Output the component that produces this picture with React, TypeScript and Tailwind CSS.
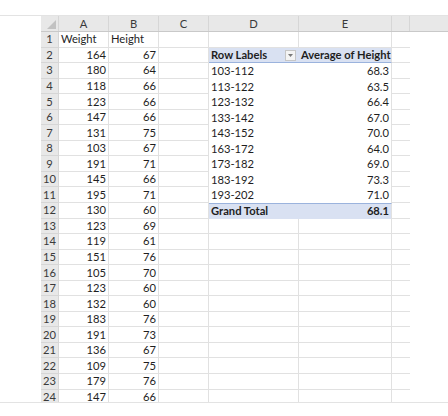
const WEIGHTS: [number, number][] = [
  [164, 67],
  [180, 64],
  [118, 66],
  [123, 66],
  [147, 66],
  [131, 75],
  [103, 67],
  [191, 71],
  [145, 66],
  [195, 71],
  [130, 60],
  [123, 69],
  [119, 61],
  [151, 76],
  [105, 70],
  [123, 60],
  [132, 60],
  [183, 76],
  [191, 73],
  [136, 67],
  [109, 75],
  [179, 76],
  [147, 66],
];

// pivot body, rows 3..11
const PIVOT: [string, string][] = [
  ['103-112', '68.3'],
  ['113-122', '63.5'],
  ['123-132', '66.4'],
  ['133-142', '67.0'],
  ['143-152', '70.0'],
  ['163-172', '64.0'],
  ['173-182', '69.0'],
  ['183-192', '73.3'],
  ['193-202', '71.0'],
];

const grid = 'border-r border-b border-[#e1e1e1]';
const cell = 'flex h-full shrink-0 items-center overflow-hidden whitespace-nowrap px-[2px] pt-[1px]';

function RowHeader({ n }: { n: number }) {
  return (
    <div className="flex h-full w-[18px] shrink-0 items-center justify-center border-r border-b border-[#d6d6d6] bg-[#e8e8e8] pt-[1px] text-[#3a3a3a]">
      {n}
    </div>
  );
}

function DropButton() {
  return (
    <span className="ml-auto mr-[1px] flex h-[11px] w-[11px] items-center justify-center border border-[#c6c6c6] bg-[#f4f4f4]">
      <svg width="5" height="3" viewBox="0 0 5 3">
        <path d="M0 0h5L2.5 3z" fill="#7a7a7a" />
      </svg>
    </span>
  );
}

function Row({ n }: { n: number }) {
  const data = n >= 2 ? WEIGHTS[n - 2] : null;
  const pivotHead = n === 2;
  const pivotBody = n >= 3 && n <= 11 ? PIVOT[n - 3] : null;
  const total = n === 12;

  return (
    <div className="flex h-[15.55px] shrink-0">
      <RowHeader n={n} />
      <div className={`${cell} ${grid} w-[50px] ${data ? 'justify-end' : ''}`}>
        {n === 1 ? 'Weight' : data?.[0]}
      </div>
      <div className={`${cell} ${grid} w-[50px] ${data ? 'justify-end' : ''}`}>
        {n === 1 ? 'Height' : data?.[1]}
      </div>
      <div className={`${cell} ${grid} w-[50px]`} />

      {pivotHead ? (
        <>
          <div className={`${cell} w-[90px] border-b border-[#9bb3dd] bg-[#d9e1f2] font-bold`}>
            Row Labels
            <DropButton />
          </div>
          <div className={`${cell} w-[93px] border-r border-b border-r-[#e1e1e1] border-b-[#9bb3dd] bg-[#d9e1f2] font-bold`}>
            Average of Height
          </div>
        </>
      ) : pivotBody ? (
        <>
          <div className={`${cell} w-[90px]`}>{pivotBody[0]}</div>
          <div className={`${cell} w-[93px] justify-end border-r border-[#e1e1e1]`}>
            {pivotBody[1]}
          </div>
        </>
      ) : total ? (
        <>
          <div className={`${cell} w-[90px] border-t border-[#9bb3dd] bg-[#d9e1f2] font-bold`}>
            Grand Total
          </div>
          <div className={`${cell} w-[93px] justify-end border-t border-r border-t-[#9bb3dd] border-r-[#e1e1e1] bg-[#d9e1f2] font-bold`}>
            68.1
          </div>
        </>
      ) : (
        <>
          <div className={`${cell} ${grid} w-[90px]`} />
          <div className={`${cell} ${grid} w-[93px]`} />
        </>
      )}

      <div className={`${cell} border-b border-[#e1e1e1] w-[18px]`} />
    </div>
  );
}

const LETTERS: { l: string; w: string }[] = [
  { l: 'A', w: 'w-[50px]' },
  { l: 'B', w: 'w-[50px]' },
  { l: 'C', w: 'w-[50px]' },
  { l: 'D', w: 'w-[90px]' },
  { l: 'E', w: 'w-[93px]' },
  { l: '', w: 'w-[18px]' },
];

export default function App() {
  const rows = Array.from({ length: 24 }, (_, i) => i + 1);

  return (
    <div className="h-[416px] w-[448px] bg-white font-['Lato','Open_Sans',sans-serif] text-[11.2px] text-[#1e1e1e]">
      <div className="mt-[15px] h-[388px] overflow-hidden border-y border-[#e3e3e3]">
        <div className="flex flex-col pl-[41px]">
          <div className="flex h-[16px] shrink-0 border-b border-[#c9c9c9] bg-[#e8e8e8] text-[#3a3a3a]">
            <div className="relative w-[18px] shrink-0 border-r border-[#d6d6d6]">
              <svg className="absolute right-[2px] bottom-[2px]" width="9" height="9" viewBox="0 0 9 9">
                <path d="M9 0V9H0z" fill="#c2c2c2" />
              </svg>
            </div>
            {LETTERS.map((c, i) => (
              <div
                key={i}
                className={`flex ${c.w} shrink-0 items-center justify-center border-r border-[#d6d6d6] pt-[1px]`}
              >
                {c.l}
              </div>
            ))}
          </div>
          {rows.map((n) => (
            <Row key={n} n={n} />
          ))}
        </div>
      </div>
    </div>
  );
}
